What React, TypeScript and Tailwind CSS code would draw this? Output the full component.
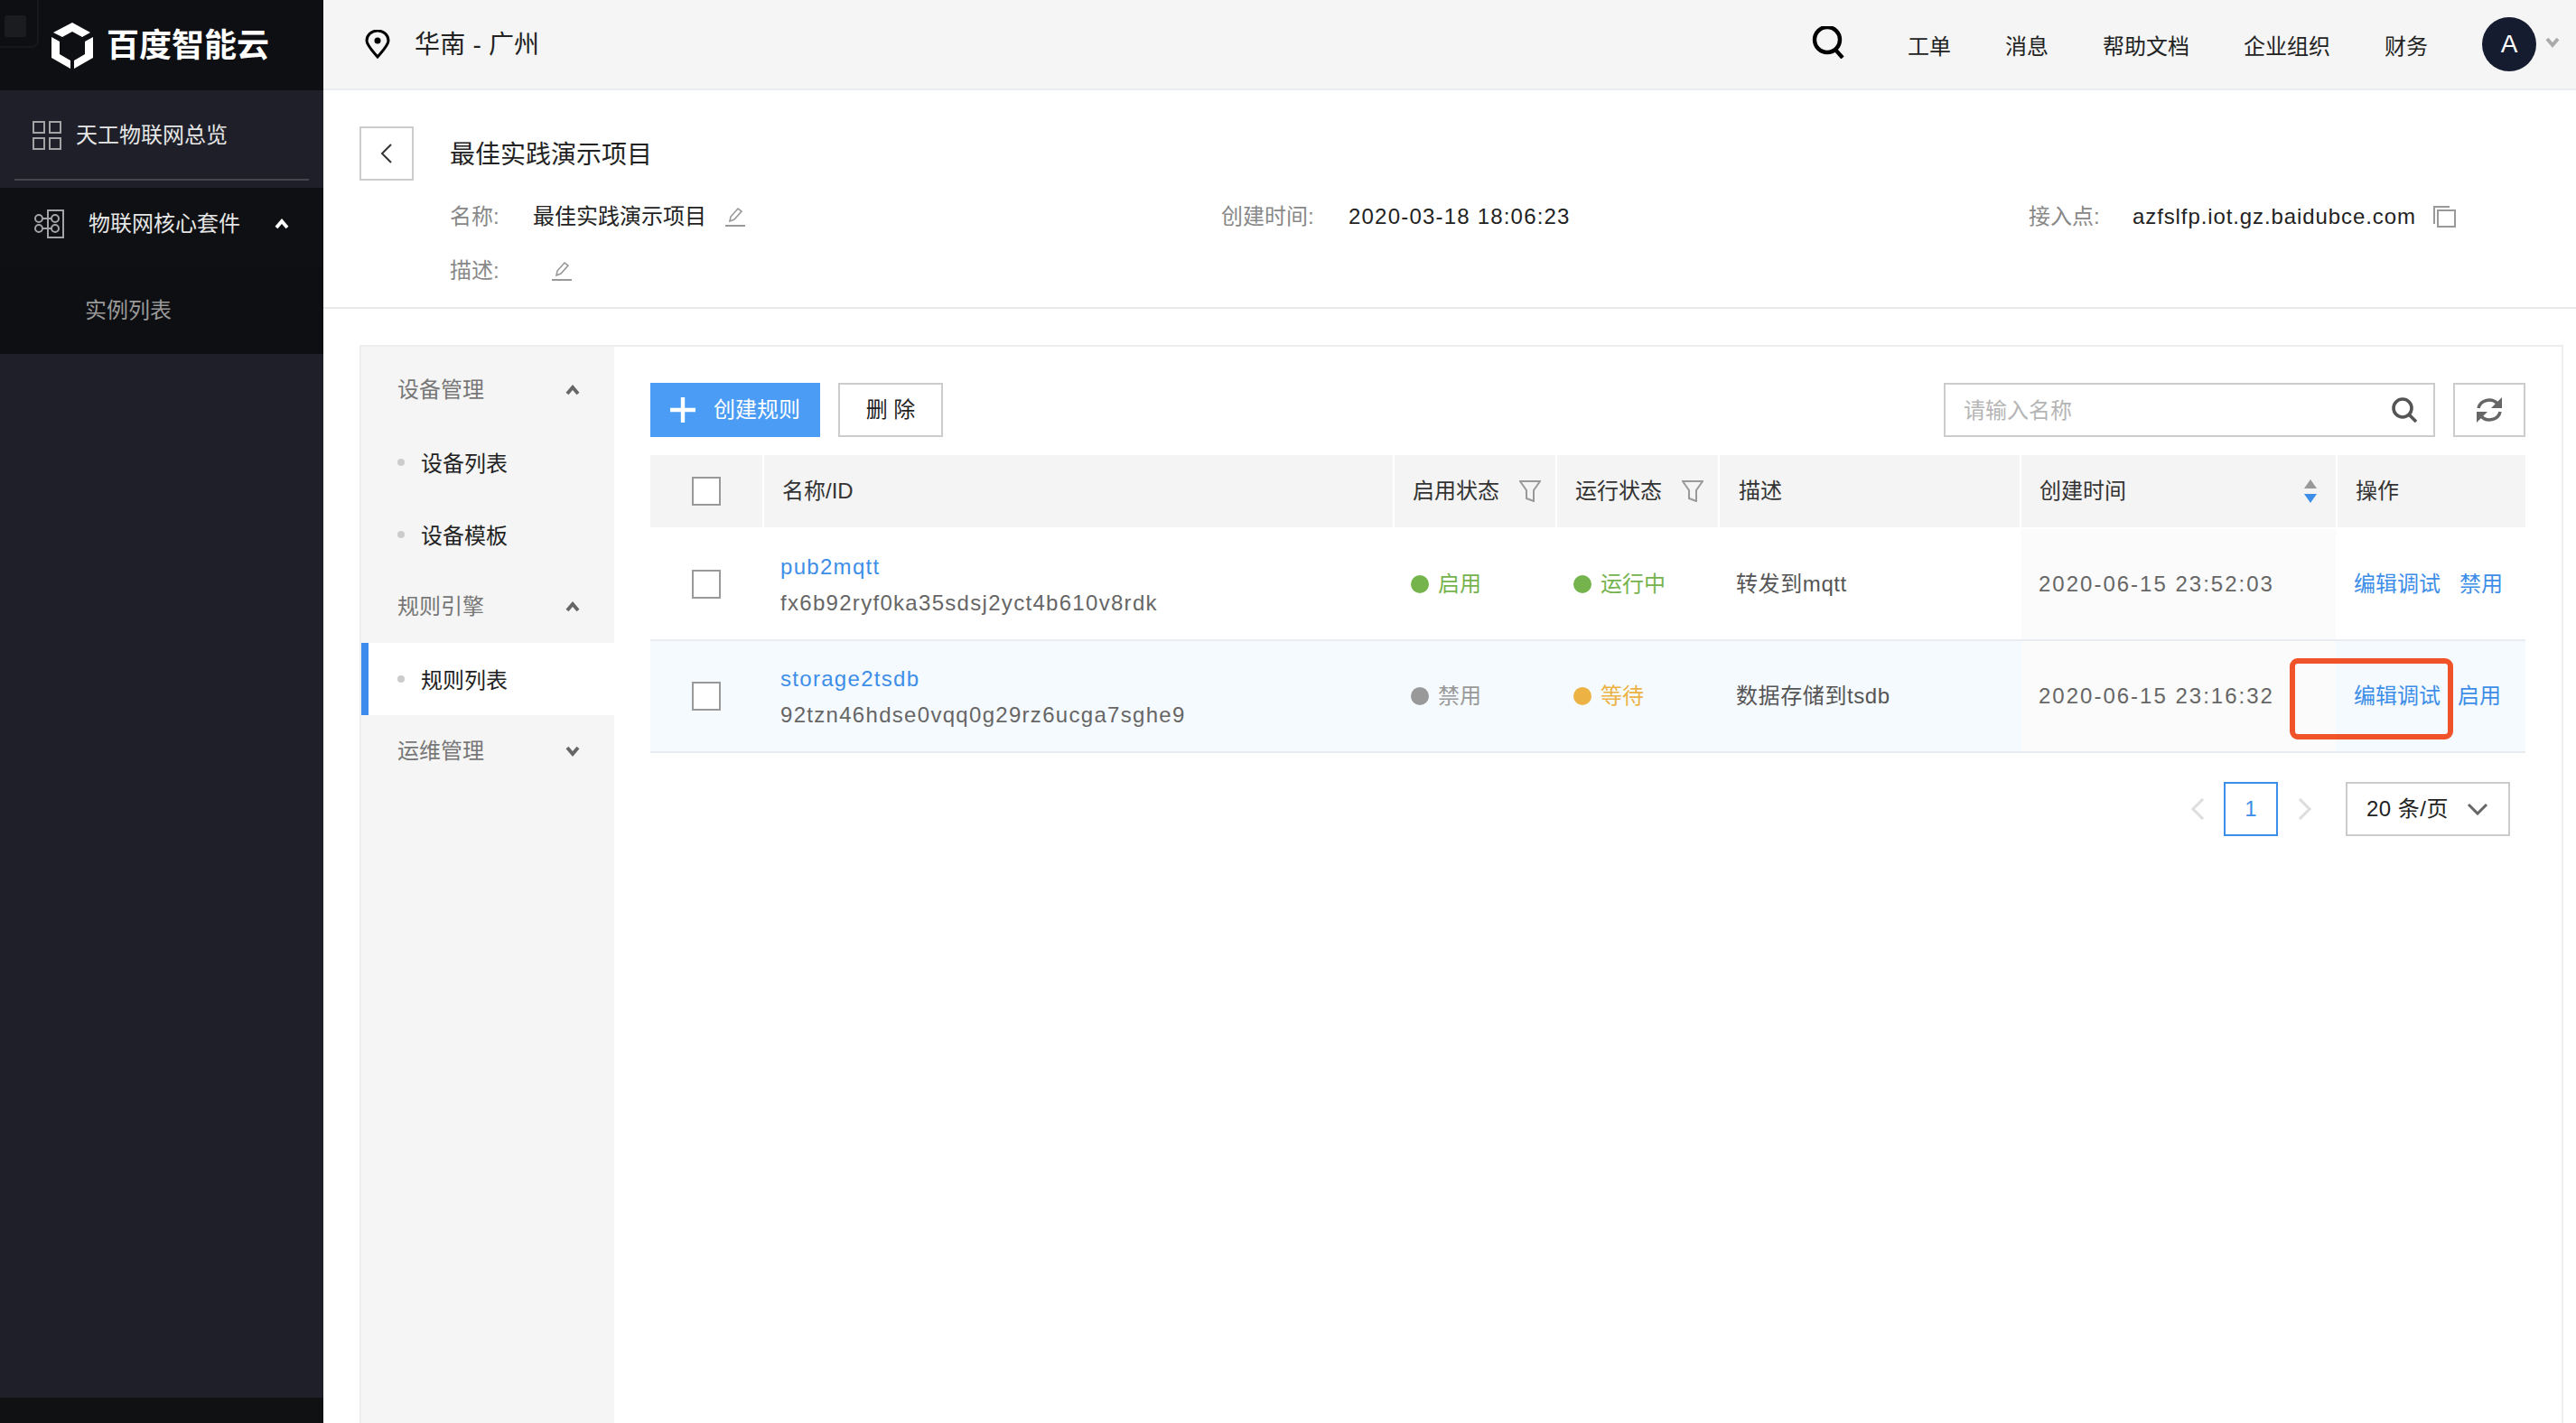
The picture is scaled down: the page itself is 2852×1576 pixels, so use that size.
import React from 'react';

const Chevron = ({ up, className }: { up?: boolean; className: string }) => (
  <svg viewBox="0 0 16 12" className={className} fill="none" stroke="currentColor" strokeWidth="3.8">
    <path d={up ? 'M2 10 L8 3 L14 10' : 'M2 2 L8 9 L14 2'} />
  </svg>
);

const EditIcon = () => (
  <svg viewBox="0 0 22 22" className="w-[22px] h-[22px] text-[#999]" fill="none" stroke="currentColor" strokeWidth="1.6">
    <path d="M5 16 L6 11 L14 2 L18 5 L10 14 Z" />
    <path d="M0 21 H22" strokeWidth="2" />
  </svg>
);

const FilterIcon = () => (
  <svg viewBox="0 0 24 24" className="w-[24px] h-[24px] text-[#999]" fill="none" stroke="currentColor" strokeWidth="2">
    <path d="M1 1 H23 L16 11 V23 L8 20 V11 Z" />
  </svg>
);

const Checkbox = () => <div className="w-[32px] h-[32px] border-2 border-[#999] bg-white" />;

const NavGroup = ({ label, up }: { label: string; up?: boolean }) => (
  <div className="h-[80px] flex items-center justify-between pl-[40px] pr-[38px] text-[#777]">
    <span>{label}</span>
    <Chevron up={up} className="w-[16px] h-[12px] text-[#666]" />
  </div>
);

const NavItem = ({ label, active }: { label: string; active?: boolean }) => (
  <div className={`h-[80px] flex items-center ${active ? 'bg-white border-l-[8px] border-[#3d8bec] pl-[32px]' : 'pl-[40px]'} text-[#222]`}>
    <span className="w-[8px] h-[8px] rounded-full bg-[#ccc] mr-[18px]" />
    <span className="mt-[4px]">{label}</span>
  </div>
);

const gridCols = 'grid grid-cols-[124px_696px_178px_178px_332px_348px_208px] gap-x-[2px]';

const HeaderCell = ({ label, pl, children }: { label?: string; pl: string; children?: React.ReactNode }) => (
  <div className={`bg-[#f4f4f4] h-full flex items-center justify-between ${pl}`}>
    <span>{label}</span>
    {children}
  </div>
);

const Status = ({ dot, text, label }: { dot: string; text: string; label: string }) => (
  <div className={`flex items-center pl-[18px] ${text}`}>
    <span className={`w-[20px] h-[20px] rounded-full mr-[10px] ${dot}`} />
    <span>{label}</span>
  </div>
);

const Row = ({
  name, id, enabled, running, desc, time, action, highlight,
}: {
  name: string;
  id: string;
  enabled: React.ReactNode;
  running: React.ReactNode;
  desc: string;
  time: string;
  action: string;
  highlight?: boolean;
}) => (
  <div className={`${gridCols} h-[122px] box-content border-b-2 border-[#e8ebef] ${highlight ? 'bg-[#f5fafe]' : 'bg-white pt-[2px]'}`}>
    <div className="flex items-center justify-center">
      <Checkbox />
    </div>
    <div className="flex flex-col justify-center pl-[18px] pt-[2px] gap-[12px] tracking-[1.3px]">
      <div className="text-[#3d8ee8] leading-[28px]">{name}</div>
      <div className="text-[#666] leading-[28px]">{id}</div>
    </div>
    {enabled}
    {running}
    <div className="flex items-center pl-[18px] text-[#555] tracking-[0.6px]">{desc}</div>
    <div className="flex items-center pl-[19px] text-[#666] bg-[#fbfbfb] tracking-[2px]">{time}</div>
    <div className="relative flex items-center pl-[18px] text-[#3d8ee8]">
      <span>编辑调试</span>
      <span className={highlight ? 'ml-[19px]' : 'ml-[21px]'}>{action}</span>
      {highlight && (
        <div className="absolute left-[-53px] top-[19px] w-[181px] h-[90px] border-[6px] border-[#f0522a] rounded-[9px]" />
      )}
    </div>
  </div>
);

export default function App() {
  return (
    <div className="w-[2852px] h-[1576px] flex overflow-hidden bg-white text-[24px] [font-family:'Liberation_Sans','Noto_Sans_CJK_SC',sans-serif]">
      {/* left dark menu */}
      <aside className="w-[358px] flex flex-col bg-[#1e1f28] shrink-0">
        <div className="relative h-[100px] bg-[#0e0f12] flex items-center pl-[57px] overflow-hidden">
          <div className="absolute left-[-20px] top-[-20px] w-[63px] h-[73px] border-2 border-[#17181b] rounded-[8px]">
            <div className="absolute left-[23px] top-[35px] w-[24px] h-[24px] rounded-[3px] bg-[#1b1c1f]" />
          </div>
          <svg viewBox="58 25 47 51" className="w-[47px] h-[51px] text-white" fill="currentColor">
            <path d="M60 36 L81 25 L101 36 L92 41 L81 35 L70 41 Z" />
            <path d="M58 41 L67 46 V60 L79 67 V76 L58 64 Z" />
            <path d="M104 41 V64 L83 76 V67 L95 60 V46 Z" />
          </svg>
          <span className="ml-[14px] mt-[2px] text-[36px] leading-none font-bold text-white">百度智能云</span>
        </div>
        <div className="h-[108px] px-[16px]">
          <div className="h-[100px] border-b-2 border-[#45464d] flex items-end pb-[32px] pl-[20px] text-[#e6e6e6]">
            <svg viewBox="0 0 32 32" className="w-[32px] h-[32px] text-[#a3a3a6] mr-[16px]" fill="none" stroke="currentColor" strokeWidth="2">
              <rect x="1" y="1" width="12" height="12" />
              <rect x="19" y="1" width="12" height="12" />
              <rect x="1" y="19" width="12" height="12" />
              <rect x="19" y="19" width="12" height="12" />
            </svg>
            <span className="leading-[32px]">天工物联网总览</span>
          </div>
        </div>
        <div className="h-[88px] bg-[#0f1013] flex items-center pl-[38px] pr-[38px] pb-[8px] text-[#e6e6e6]">
          <svg viewBox="0 0 34 32" className="w-[34px] h-[32px] text-[#a3a3a6] mr-[26px]" fill="none" stroke="currentColor" strokeWidth="2">
            <rect x="15" y="1" width="17" height="30" />
            <circle cx="5" cy="10" r="4" />
            <circle cx="5" cy="21" r="4" />
            <circle cx="23" cy="10" r="4" />
            <circle cx="23" cy="21" r="4" />
            <path d="M9 10 H19 M9 21 H19" />
          </svg>
          <span className="flex-1">物联网核心套件</span>
          <Chevron up className="w-[16px] h-[12px] text-white" />
        </div>
        <div className="h-[96px] bg-[#0e0f12] flex items-center pl-[94px] text-[#999]">实例列表</div>
        <div className="flex-1" />
        <div className="h-[28px] bg-[#0f1113]" />
      </aside>

      <main className="flex-1 flex flex-col min-w-0">
        {/* top bar */}
        <header className="h-[100px] shrink-0 bg-[#f5f5f5] border-b-2 border-[#e8ecf0] flex items-center pl-[46px] pr-[17px]">
          <svg viewBox="0 0 28 32" className="w-[28px] h-[32px] text-black" fill="none" stroke="currentColor" strokeWidth="3">
            <path d="M14 30 C8 23 2 17 2 12 A12 11 0 0 1 26 12 C26 17 20 23 14 30 Z" />
            <circle cx="14" cy="12" r="3.5" fill="currentColor" stroke="none" />
          </svg>
          <span className="ml-[27px] mt-[2px] text-[28px] text-[#222] tracking-[0.2px]">华南 - 广州</span>
          <div className="flex-1" />
          <svg viewBox="0 0 36 36" className="w-[36px] h-[36px] text-black mt-[-4px]" fill="none" stroke="currentColor" strokeWidth="4.4">
            <circle cx="17" cy="15" r="14" />
            <path d="M26 26 L34 35" />
          </svg>
          <nav className="flex items-center text-[#222] mt-[6px]">
            <span className="ml-[70px]">工单</span>
            <span className="ml-[60px]">消息</span>
            <span className="ml-[60px]">帮助文档</span>
            <span className="ml-[60px]">企业组织</span>
            <span className="ml-[60px]">财务</span>
          </nav>
          <div className="ml-[60px] w-[60px] h-[60px] rounded-full bg-[#151c30] text-white text-[28px] flex items-center justify-center">A</div>
          <Chevron className="ml-[9px] mt-[-4px] w-[18px] h-[12px] text-[#aaa]" />
        </header>

        {/* project info */}
        <section className="h-[242px] shrink-0 border-b-2 border-[#e6e8ea] px-[40px] pt-[40px]">
          <div className="flex items-center h-[60px]">
            <div className="w-[60px] h-[60px] border-2 border-[#ccc] flex items-center justify-center">
              <svg viewBox="0 0 14 24" className="w-[14px] h-[24px] text-[#333]" fill="none" stroke="currentColor" strokeWidth="2">
                <path d="M12 2 L2 12 L12 22" />
              </svg>
            </div>
            <h1 className="ml-[40px] mt-[3px] text-[28px] font-normal text-[#222]">最佳实践演示项目</h1>
          </div>
          <div className="mt-[20px] pl-[100px] grid grid-cols-[854px_894px_auto] h-[40px] items-center text-[#222]">
            <div className="flex items-center">
              <span className="w-[92px] text-[#888]">名称:</span>
              <span>最佳实践演示项目</span>
              <span className="ml-[21px]"><EditIcon /></span>
            </div>
            <div className="flex items-center">
              <span className="w-[141px] text-[#888]">创建时间:</span>
              <span className="tracking-[1.2px]">2020-03-18 18:06:23</span>
            </div>
            <div className="flex items-center">
              <span className="w-[115px] text-[#888]">接入点:</span>
              <span className="tracking-[0.9px]">azfslfp.iot.gz.baidubce.com</span>
              <svg viewBox="0 0 25 24" className="ml-[19px] w-[25px] h-[24px] text-[#999]" fill="none" stroke="currentColor" strokeWidth="2">
                <path d="M1 20 V1 H18" />
                <rect x="5" y="5" width="19" height="18" />
              </svg>
            </div>
          </div>
          <div className="mt-[20px] pl-[100px] flex items-center h-[40px]">
            <span className="w-[113px] text-[#888]">描述:</span>
            <EditIcon />
          </div>
        </section>

        {/* panel */}
        <section className="flex-1 min-h-0 pl-[40px] pr-[14px] pt-[40px]">
          <div className="h-full border-2 border-b-0 border-[#eee] flex">
            <div className="w-[280px] bg-[#f5f5f5] pt-[8px] shrink-0">
              <NavGroup label="设备管理" up />
              <NavItem label="设备列表" />
              <NavItem label="设备模板" />
              <NavGroup label="规则引擎" up />
              <NavItem label="规则列表" active />
              <NavGroup label="运维管理" />
            </div>
            <div className="flex-1 min-w-0 px-[40px] pt-[40px]">
              <div className="flex items-center h-[60px]">
                <button className="w-[188px] h-[60px] bg-[#4a9cf5] text-white flex items-center pl-[22px]">
                  <svg viewBox="0 0 28 28" className="w-[28px] h-[28px]" fill="none" stroke="currentColor" strokeWidth="4.4">
                    <path d="M14 0 V28 M0 14 H28" />
                  </svg>
                  <span className="ml-[20px]">创建规则</span>
                </button>
                <button className="ml-[20px] w-[116px] h-[60px] border-2 border-[#ccc] text-[#222]">删 除</button>
                <div className="flex-1" />
                <div className="w-[544px] h-[60px] border-2 border-[#ccc] flex items-center justify-between pl-[20px] pr-[18px]">
                  <span className="text-[#b5b5b5] mt-[2px]">请输入名称</span>
                  <svg viewBox="0 0 28 28" className="w-[28px] h-[28px] text-[#555]" fill="none" stroke="currentColor" strokeWidth="3.6">
                    <circle cx="12" cy="12" r="10" />
                    <path d="M19 19 L27 27" />
                  </svg>
                </div>
                <div className="ml-[20px] w-[80px] h-[60px] border-2 border-[#ccc] flex items-center justify-center">
                  <svg viewBox="0 0 30 30" className="w-[30px] h-[30px] text-[#666]" fill="none" stroke="currentColor" strokeWidth="3.6">
                    <path d="M3 13 A12 11 0 0 1 24 8" />
                    <path d="M27 17 A12 11 0 0 1 6 22" />
                    <path d="M29 1 V13 H17 Z" fill="currentColor" stroke="none" />
                    <path d="M1 29 V17 H13 Z" fill="currentColor" stroke="none" />
                  </svg>
                </div>
              </div>

              <div className="mt-[20px]">
                <div className={`${gridCols} h-[80px] text-[#333]`}>
                  <div className="bg-[#f4f4f4] flex items-center justify-center"><Checkbox /></div>
                  <HeaderCell label="名称/ID" pl="pl-[20px]" />
                  <HeaderCell label="启用状态" pl="pl-[20px] pr-[16px]"><FilterIcon /></HeaderCell>
                  <HeaderCell label="运行状态" pl="pl-[20px] pr-[16px]"><FilterIcon /></HeaderCell>
                  <HeaderCell label="描述" pl="pl-[21px]" />
                  <HeaderCell label="创建时间" pl="pl-[20px] pr-[20px]">
                    <svg viewBox="0 0 16 26" className="w-[16px] h-[26px]">
                      <path d="M8 0 L15 10 H1 Z" fill="#999" />
                      <path d="M8 26 L15 16 H1 Z" fill="#3d8ee8" />
                    </svg>
                  </HeaderCell>
                  <HeaderCell label="操作" pl="pl-[20px]" />
                </div>
                <Row
                  name="pub2mqtt"
                  id="fx6b92ryf0ka35sdsj2yct4b610v8rdk"
                  enabled={<Status dot="bg-[#75b34c]" text="text-[#75b34c]" label="启用" />}
                  running={<Status dot="bg-[#75b34c]" text="text-[#75b34c]" label="运行中" />}
                  desc="转发到mqtt"
                  time="2020-06-15 23:52:03"
                  action="禁用"
                />
                <Row
                  highlight
                  name="storage2tsdb"
                  id="92tzn46hdse0vqq0g29rz6ucga7sghe9"
                  enabled={<Status dot="bg-[#999]" text="text-[#999]" label="禁用" />}
                  running={<Status dot="bg-[#ecb244]" text="text-[#ecb244]" label="等待" />}
                  desc="数据存储到tsdb"
                  time="2020-06-15 23:16:32"
                  action="启用"
                />
              </div>

              <div className="mt-[32px] flex items-center justify-end pr-[17px]">
                <svg viewBox="0 0 16 26" className="w-[16px] h-[26px] text-[#ddd]" fill="none" stroke="currentColor" strokeWidth="3">
                  <path d="M14 2 L3 13 L14 24" />
                </svg>
                <div className="ml-[21px] w-[60px] h-[60px] border-2 border-[#3d8ee8] text-[#3d8ee8] flex items-center justify-center">1</div>
                <svg viewBox="0 0 16 26" className="ml-[22px] w-[16px] h-[26px] text-[#ddd]" fill="none" stroke="currentColor" strokeWidth="3">
                  <path d="M2 2 L13 13 L2 24" />
                </svg>
                <div className="ml-[37px] w-[182px] h-[60px] border-2 border-[#ccc] flex items-center justify-between pl-[21px] pr-[22px] text-[#222]">
                  <span className="tracking-[0.5px]">20 条/页</span>
                  <svg viewBox="0 0 24 14" className="w-[24px] h-[14px] text-[#666]" fill="none" stroke="currentColor" strokeWidth="3">
                    <path d="M2 2 L12 12 L22 2" />
                  </svg>
                </div>
              </div>
            </div>
          </div>
        </section>
      </main>
    </div>
  );
}
